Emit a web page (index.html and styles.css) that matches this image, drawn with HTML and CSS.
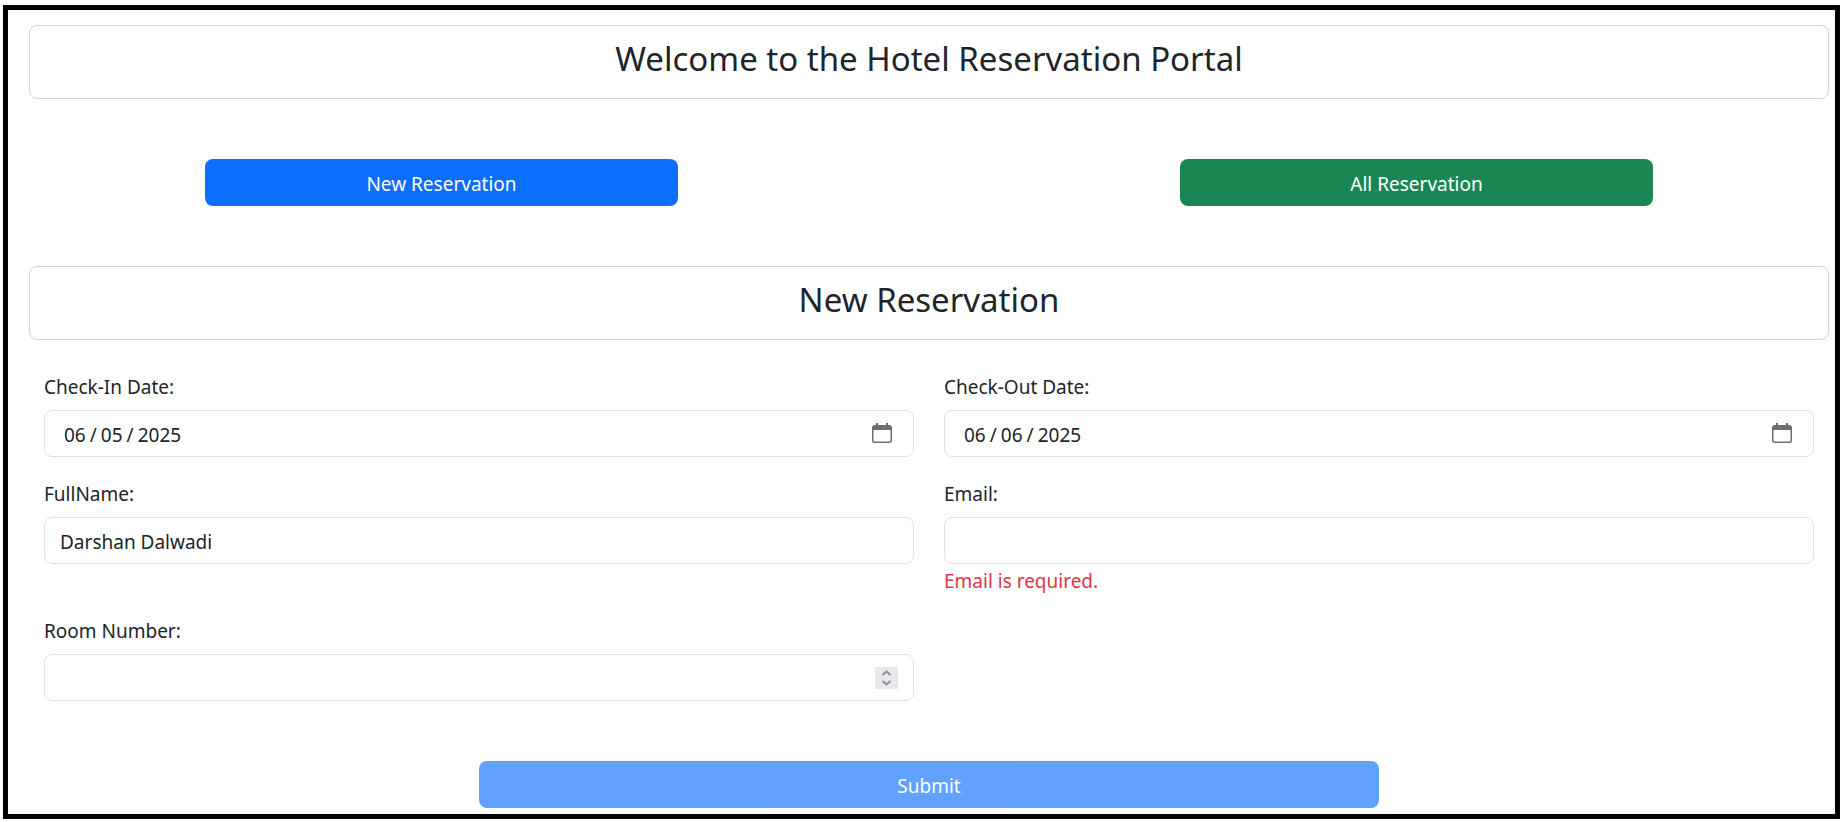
FILE: index.html
```html
<!DOCTYPE html>
<html lang="en">
<head>
<meta charset="utf-8">
<meta name="viewport" content="width=device-width, initial-scale=1">
<title>Hotel Reservation Portal</title>
<link rel="stylesheet" href="styles.css">
</head>
<body>
<main class="portal">
  <header class="card"><h1 class="card-title">Welcome to the Hotel Reservation Portal</h1></header>
  <nav class="actions">
    <button type="button" class="btn btn-primary btn-new">New Reservation</button>
    <button type="button" class="btn btn-success btn-all">All Reservation</button>
  </nav>
  <div class="card"><h2 class="card-title">New Reservation</h2></div>
  <form class="form" novalidate>
    <div class="fields">
      <div class="field">
        <label for="checkin">Check-In Date:</label>
        <div class="control">
          <input class="input input-date" type="date" id="checkin" value="2025-06-05">
          <svg class="calendar" viewBox="0 0 20 20" aria-hidden="true"><path fill-rule="evenodd" d="M4 0h2v2h8V0h2v2h1a3 3 0 0 1 3 3v12.500a2.500 2.500 0 0 1-2.500 2.500h-15A2.500 2.500 0 0 1 0 17.500V5a3 3 0 0 1 3-3h1zM1.500 7v10.500a1 1 0 0 0 1 1h15a1 1 0 0 0 1-1V7z"/></svg>
        </div>
      </div>
      <div class="field">
        <label for="checkout">Check-Out Date:</label>
        <div class="control">
          <input class="input input-date" type="date" id="checkout" value="2025-06-06">
          <svg class="calendar" viewBox="0 0 20 20" aria-hidden="true"><path fill-rule="evenodd" d="M4 0h2v2h8V0h2v2h1a3 3 0 0 1 3 3v12.500a2.500 2.500 0 0 1-2.500 2.500h-15A2.500 2.500 0 0 1 0 17.500V5a3 3 0 0 1 3-3h1zM1.500 7v10.500a1 1 0 0 0 1 1h15a1 1 0 0 0 1-1V7z"/></svg>
        </div>
      </div>
      <div class="field">
        <label for="fullname">FullName:</label>
        <div class="control"><input class="input" type="text" id="fullname" value="Darshan Dalwadi"></div>
      </div>
      <div class="field">
        <label for="email">Email:</label>
        <div class="control"><input class="input" type="email" id="email" aria-describedby="email-error"></div>
        <div class="error" id="email-error">Email is required.</div>
      </div>
      <div class="field">
        <label for="room">Room Number:</label>
        <div class="control">
          <input class="input input-number" type="number" id="room">
          <svg class="spinner" viewBox="0 0 23 22" aria-hidden="true"><path d="M7.500 8l4-3.500 4 3.500M7.500 14l4 3.500 4-3.500"/></svg>
        </div>
      </div>
    </div>
    <button type="submit" class="btn btn-primary btn-submit" disabled>Submit</button>
  </form>
</main>
</body>
</html>
```
FILE: styles.css
```css
* {
  box-sizing: border-box;
}

body {
  margin: 0;
  padding: 5px 2px 3px 3px;
  background: #fff;
  color: #212529;
  font-family: "Segoe UI", "Noto Sans", sans-serif;
  font-size: 19px;
  line-height: 26px;
}

.portal {
  border: 5px solid #000;
  padding: 15px 6px 6px 21px;
}

.card {
  padding: 10px;
  border: 1px solid #d2d2d2;
  border-radius: 8px;
  text-align: center;
}

.card-title {
  margin: 0 0 6px;
  font-size: 33px;
  font-weight: 400;
  line-height: 46px;
}

.actions {
  display: grid;
  grid-template-columns: 176fr 473fr 502fr 473fr 176fr;
  padding: 60px 0;
}

.btn {
  padding: 12px 15px 9px;
  border: 0;
  border-radius: 8px;
  color: #fff;
  font: inherit;
  cursor: pointer;
}

.btn-new {
  grid-column: 2;
}

.btn-all {
  grid-column: 4;
}

.btn-primary {
  background: #0d6efd;
}

.btn-success {
  background: #198754;
}

.form {
  padding: 30px 15px 0;
}

.fields {
  display: grid;
  grid-template-columns: 1fr 1fr;
  gap: 20px 30px;
}

.field label {
  display: block;
  padding: 4px 0 10px;
}

.control {
  position: relative;
}

.input {
  display: block;
  width: 100%;
  height: 47px;
  padding: 9px 15px 7px;
  border: 1px solid #dee2e6;
  border-radius: 8px;
  background: #fff;
  color: inherit;
  font: inherit;
}

.input-date {
  padding-left: 18px;
}

.input-date::-webkit-datetime-edit-text {
  padding: 0 3px;
}

.input-date::-webkit-calendar-picker-indicator {
  opacity: 0;
}

.input-number {
  appearance: textfield;
}

.input-number::-webkit-inner-spin-button {
  appearance: none;
}

.calendar,
.spinner {
  position: absolute;
  pointer-events: none;
}

.calendar {
  top: 13px;
  right: 22px;
  width: 20px;
  height: 20px;
  fill: #6c6e70;
}

.spinner {
  top: 13px;
  right: 16px;
  width: 23px;
  height: 22px;
  background: #e9e9ed;
  fill: none;
  stroke: #8f8f9d;
  stroke-width: 2;
}

.error {
  padding-top: 4px;
  color: #dc3545;
}

.btn-submit {
  display: block;
  width: 900px;
  max-width: 100%;
  margin: 60px auto 0;
  opacity: 0.65;
}
```
